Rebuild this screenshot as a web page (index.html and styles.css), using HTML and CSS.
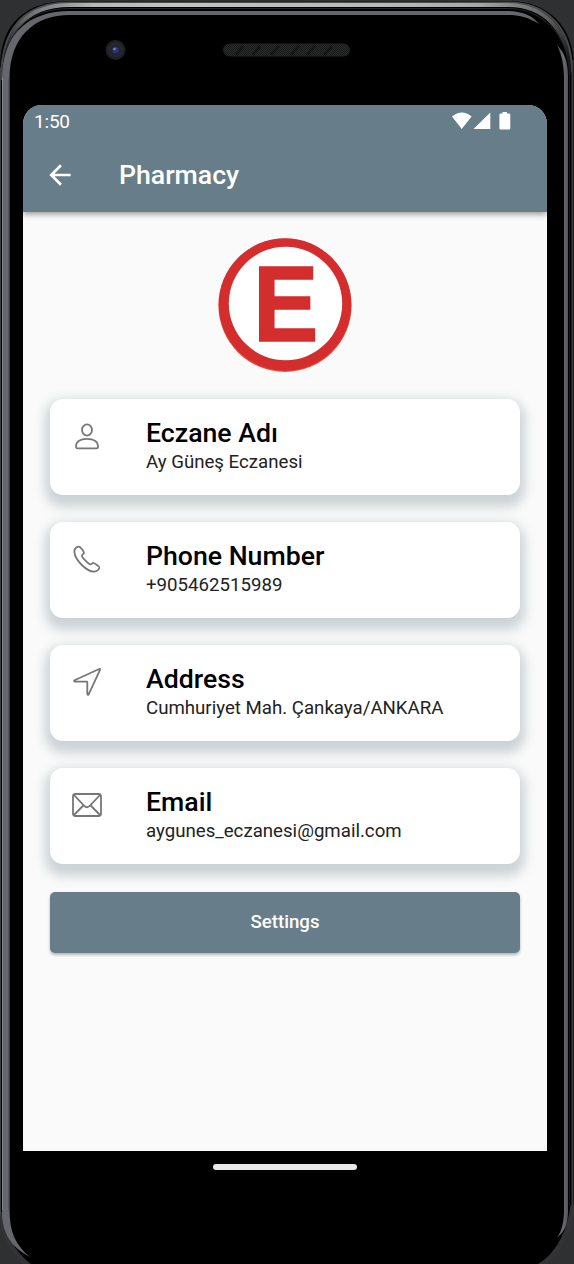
FILE: index.html
```html
<!DOCTYPE html>
<html lang="en">
<head>
<meta charset="utf-8">
<title>Pharmacy</title>
<link rel="stylesheet" href="styles.css">
</head>
<body>
<div class="device">
  <svg class="frame" viewBox="0 0 574 1264" aria-hidden="true">
    <defs>
      <linearGradient id="rim" x1="0" y1="0" x2="1" y2="0">
        <stop offset="0" stop-color="#3a3b3e"/><stop offset=".06" stop-color="#77787c"/><stop offset=".16" stop-color="#b4b6b8"/><stop offset=".3" stop-color="#c0c4c5"/><stop offset=".72" stop-color="#b4b7b8"/><stop offset=".84" stop-color="#a5a6a8"/><stop offset=".95" stop-color="#666"/><stop offset="1" stop-color="#444"/>
      </linearGradient>
      <linearGradient id="fade" x1="0" y1="0" x2="0" y2="1">
        <stop offset="0" stop-color="#fff"/><stop offset=".2" stop-color="#fff"/><stop offset=".7" stop-color="#333"/><stop offset="1" stop-color="#222"/>
      </linearGradient>
      <mask id="top" maskUnits="userSpaceOnUse" x="0" y="0" width="574" height="100"><rect width="574" height="100" fill="url(#fade)"/></mask>
      <linearGradient id="edge" x1="0" y1="0" x2="1" y2="0">
        <stop offset="0" stop-color="#4d4d53"/><stop offset=".5" stop-color="#6b6b73"/><stop offset="1" stop-color="#55555b"/>
      </linearGradient>
      <pattern id="mesh" width="2" height="2" patternUnits="userSpaceOnUse"><rect width="2" height="2" fill="#2b2e2d"/><path d="M0 0h1v1H0zM1 1h1v1H1z" fill="#161717"/></pattern>
    </defs>
    <path d="M0 68C0 22 27 1 70 1H508C548 1 574 26 574 68V1196C574 1228 560 1250 538 1264H31C9 1248 0 1230 0 1200Z" fill="#000"/>
    <path d="M.5 1212C3 1236 14 1254 29 1266M573 1205C570 1232 558 1253 541 1266" fill="none" stroke="#333335" stroke-width="5"/>
    <path d="M1 80C1 25 26 2.500 70 2.500H508C546 2.500 572 27 572 72" fill="none" stroke="#4a4b4d" stroke-width="2"/>
    <path d="M1.500 85C2 27 29 5 70 5H508C543 5 570 29 570.500 75" fill="none" stroke="url(#rim)" stroke-width="4" mask="url(#top)"/>
    <path d="M4 66C7 29 31 8.500 70 8.500H508C534 8.500 556 24 565 49" fill="none" stroke="#26272a"/>
    <path d="M.5 68V1215" stroke="#3d3e40"/>
    <path d="M572.500 60V1205" stroke="#3a3b3c" stroke-width="2"/>
    <path d="M569.500 60V1205" stroke="#161718"/>
    <path d="M2 1212V78C3 33 29 11 70 11H508C522 11 533 16 539 24C528 17 519 15 508 15H70C34 15 10 37 9.500 78V1210C9.500 1232 16 1246 30 1257C11 1247 2 1233 2 1212Z" fill="#66666d"/>
    <path d="M2.500 78V1210" stroke="#85868a"/>
    <path d="M9 78V1210" stroke="#44454a"/>
    <path d="M557 45C564 52 568 61 568 76V1211C568 1224 565 1231 557 1238C562 1230 564 1222 564 1210V78C564 65 562 56 557 45Z" fill="url(#edge)"/>
    <circle cx="115.500" cy="50" r="10" fill="#1f2021"/>
    <circle cx="115.500" cy="50" r="7.500" fill="#27282b"/>
    <circle cx="115.700" cy="50.500" r="5.300" fill="#1d2440"/>
    <circle cx="115.500" cy="50" r="3.300" fill="#2b376a"/>
    <circle cx="114.500" cy="49" r="1.200" fill="#7f8cb8"/>
    <rect x="223.500" y="44" width="126" height="12" rx="6" fill="url(#mesh)" stroke="#222323"/>
    <path d="M243 46l-7 9M260 46l-7 9M279 46l-8 9M299 46l-8 9M315 46l-8 9M332 46l-8 9" stroke="#0c0d0d" stroke-opacity=".5" stroke-width="3"/>
  </svg>

  <main class="screen">
    <header class="app-header">
      <div class="status-bar">
        <span class="clock">1:50</span>
        <svg class="status-icons" width="60" height="20" viewBox="0 0 60 20" fill="#fff">
          <path d="M0 5.600Q10 -2.600 19.600 5.600L9.700 18Z"/>
          <path d="M38.300 1.600V18H21.500Z"/>
          <path d="M50.500 1h4.500v1.500h2q1.300 0 1.300 1.300V17.200q0 1.300-1.300 1.300h-8.300q-1.300 0-1.300-1.300V3.800q0-1.300 1.300-1.300h1.800z"/>
        </svg>
      </div>
      <div class="app-bar">
        <svg class="back" width="32" height="32" viewBox="0 0 24 24" fill="#fff"><path d="M20 11H7.830l5.590-5.590L12 4l-8 8 8 8 1.410-1.410L7.830 13H20v-2z"/></svg>
        <h1 class="page-title">Pharmacy</h1>
      </div>
    </header>

    <div class="content">
      <svg class="logo" width="134" height="134" viewBox="0 0 134 134">
        <circle cx="67" cy="67.300" r="66.600" fill="#e8503f"/>
        <circle cx="67" cy="66.500" r="66.200" fill="#d32d2d"/>
        <circle cx="67.500" cy="65.500" r="56.700" fill="#fff"/>
        <text class="logo-letter" transform="translate(35.300 103.200) scale(.91 1)">E</text>
      </svg>

      <section class="card">
        <svg class="card-icon" viewBox="0 0 32 32"><ellipse cx="16" cy="9" rx="5" ry="5.600"/><path d="M5 25.700C5 20.500 9.500 17.800 16 17.800S27 20.500 27 25.700Q27 27.300 25.500 27.300H6.500Q5 27.300 5 25.700Z"/></svg>
        <div class="card-text"><h2 class="card-title">Eczane Adı</h2><p class="card-value">Ay Güneş Eczanesi</p></div>
      </section>
      <section class="card">
        <svg class="card-icon" viewBox="0 0 32 32"><path d="M7 3.700C5 4.500 3.200 6.600 3.400 9.200C3.800 13.200 7.200 18.500 10.800 22C14.500 25.600 19.300 28.600 22.800 28.600C25.300 28.600 27.800 26.800 28.400 24.700C28.700 23.500 24.500 20.700 22.600 20C21.500 19.600 20.600 21.400 19.500 21.400C17.600 21.400 10.900 14.500 10.900 12.700C10.900 11.500 13.300 10.700 13 9.700C12.500 7.900 9.300 2.900 7 3.700Z"/></svg>
        <div class="card-text"><h2 class="card-title">Phone Number</h2><p class="card-value">+905462515989</p></div>
      </section>
      <section class="card">
        <svg class="card-icon" viewBox="0 0 32 32"><path d="M28.200 3L3.600 14.300Q2.300 15.200 4 15.700H15.900Q16.300 15.700 16.300 16.100V28Q16.800 29.700 17.700 28.400L29 3.800Q29.300 2.500 28.200 3Z"/></svg>
        <div class="card-text"><h2 class="card-title">Address</h2><p class="card-value">Cumhuriyet Mah. Çankaya/ANKARA</p></div>
      </section>
      <section class="card">
        <svg class="card-icon" viewBox="0 0 32 32"><rect x="2" y="5" width="28" height="22" rx="2.500"/><path d="M3 6L13 16.700Q16 19.800 19 16.700L29 6M3 26L12.300 16.500M29 26L19.700 16.500"/></svg>
        <div class="card-text"><h2 class="card-title">Email</h2><p class="card-value">aygunes_eczanesi@gmail.com</p></div>
      </section>

      <button class="settings" type="button">Settings</button>
    </div>
  </main>
  <div class="nav-area"><div class="home-pill"></div></div>
</div>
</body>
</html>
```
FILE: styles.css
```css
* { box-sizing: border-box; }

body {
  margin: 0;
  background: #2f3032;
  font-family: Roboto, "Noto Sans", sans-serif;
}

h1, h2, p { margin: 0; }

.device {
  position: relative;
  width: 574px;
  height: 1264px;
  padding: 105px 27px 0 23px;
  overflow: hidden;
}

.frame {
  position: absolute;
  inset: 0;
  z-index: -1;
  width: 574px;
  height: 1264px;
}

.screen {
  width: 524px;
  height: 1046px;
  background: #fafafa;
  border-radius: 19px 19px 0 0;
  overflow: hidden;
}

.app-header {
  height: 107px;
  background: #677d89;
  color: #fff;
  box-shadow: 0 2px 6px rgba(0, 0, 0, .42);
}

.status-bar {
  display: flex;
  justify-content: space-between;
  height: 32px;
  padding: 6px 35.500px 0 11px;
}

.clock {
  font-size: 19px;
  line-height: 22px;
  letter-spacing: -.2px;
}

.app-bar {
  display: flex;
  align-items: center;
  gap: 43px;
  height: 75px;
  padding-left: 21px;
}

.page-title {
  font-size: 26.67px;
  line-height: 32px;
  font-weight: 500;
}

.content {
  display: flex;
  flex-direction: column;
  gap: 26.85px;
  padding: 26.2px 27px 0;
}

.logo { align-self: center; }

.logo-letter {
  font: bold 107px "Liberation Sans", sans-serif;
  fill: #d32d2d;
  stroke: #d32d2d;
  stroke-width: 1.7px;
}

.card {
  display: flex;
  gap: 43px;
  height: 96px;
  padding: 20px 21px;
  background: #fff;
  border-radius: 13px;
  box-shadow: 0 6.7px 11px 5px rgba(103, 125, 137, .31);
}

.card-icon {
  width: 32px;
  height: 32px;
  margin: 1.5px .5px 0 -.5px;
  fill: none;
  stroke: #777;
  stroke-width: 1.8;
  stroke-linejoin: round;
}

.card-title {
  color: #000;
  font-size: 26.67px;
  line-height: 28px;
  font-weight: 500;
}

.card-value {
  padding-top: 1px;
  color: #222;
  font-size: 18.67px;
  line-height: 28px;
}

.settings {
  height: 61.5px;
  margin-top: 1.300px;
  padding: 0;
  border: 0;
  border-radius: 5px;
  background: #677d89;
  box-shadow: 0 2px 3px rgba(0, 0, 0, .28);
  color: #fff;
  font: 500 18.67px Roboto, "Noto Sans", sans-serif;
}

.nav-area {
  display: flex;
  justify-content: center;
  padding-top: 13px;
}

.home-pill {
  width: 144px;
  height: 6px;
  border-radius: 3px;
  background: #e9e9e9;
}
```
